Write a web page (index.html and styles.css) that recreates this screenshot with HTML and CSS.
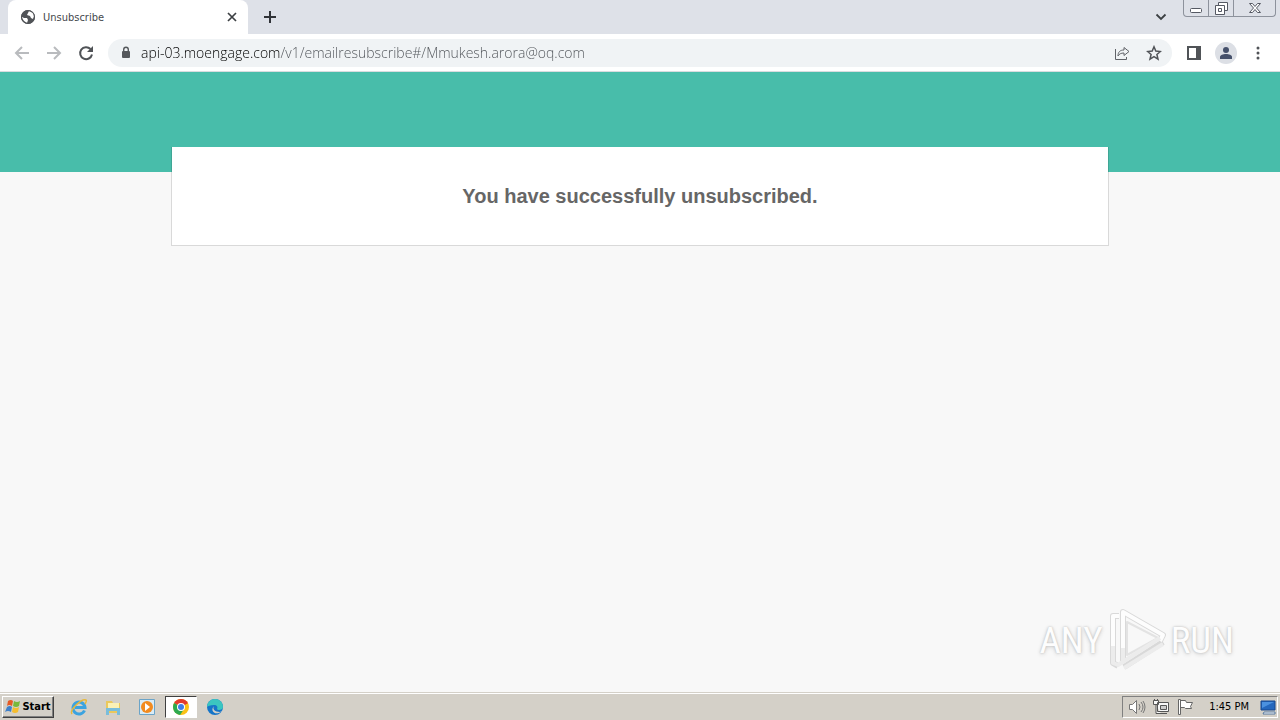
FILE: index.html
```html
<!DOCTYPE html>
<html lang="en">
<head>
  <meta charset="UTF-8" />
  <meta name="viewport" content="width=device-width, initial-scale=1.0"/>
  <title>Unsubscribe</title>
  <link rel="stylesheet" href="styles.css">
</head>
<body>

  <header class="tab-strip">
    <div class="tab">
      <svg class="globe" width="16" height="16" viewBox="0 0 16 16">
        <circle cx="8" cy="8" r="7" fill="#505357"/>
        <path d="M2 8l2 1h3l1 2-1 3-3-2-2-3zM9 2l4 2 1 3-1 3-2-1-1-2-3-1 1-2z" fill="#fff"/>
        <circle cx="8" cy="8" r="6.500" fill="none" stroke="#505357"/>
      </svg>
      <span class="tab-title">Unsubscribe</span>
      <button class="icon-button" aria-label="Close tab">
        <svg width="16" height="16" viewBox="0 0 16 16"><path d="M4 4l8 8M12 4l-8 8" stroke="#3c4043" stroke-width="1.700"/></svg>
      </button>
    </div>
    <button class="icon-button new-tab" aria-label="New tab">
      <svg width="16" height="16" viewBox="0 0 16 16"><path d="M8 2v12M2 8h12" stroke="#303338" stroke-width="2"/></svg>
    </button>
    <button class="icon-button tab-search" aria-label="Search tabs">
      <svg width="16" height="16" viewBox="0 0 16 16"><path d="M3.500 5.500L8 10l4.500-4.500" fill="none" stroke="#3c4043" stroke-width="1.800"/></svg>
    </button>
    <div class="window-buttons">
      <button aria-label="Minimize">
        <svg width="14" height="16" viewBox="0 0 14 16"><rect x="1.500" y="8.500" width="11" height="4" rx="1" fill="#fff" stroke="#555963"/></svg>
      </button>
      <button aria-label="Restore">
        <svg width="14" height="16" viewBox="0 0 14 16"><path d="M4.500 2.500h9v8h-9z" fill="#fff" stroke="#555963"/><path d="M1.500 5.500h9v9h-9zM4.500 8.500h3v3h-3z" fill="#fff" stroke="#555963"/></svg>
      </button>
      <button class="close-window" aria-label="Close">
        <svg width="14" height="16" viewBox="0 0 14 16"><path d="M1.500 3.500h3l2.500 3 2.500-3h3l-4 4.500 4 4.500h-3l-2.500-3-2.500 3h-3l4-4.500z" fill="#fff" stroke="#555963"/></svg>
      </button>
    </div>
  </header>

  <nav class="toolbar">
    <button class="icon-button" aria-label="Back">
      <svg width="16" height="16" viewBox="0 0 16 16"><path d="M15 8H2M8 2L2 8l6 6" fill="none" stroke="#b9bbbe" stroke-width="2"/></svg>
    </button>
    <button class="icon-button" aria-label="Forward">
      <svg width="16" height="16" viewBox="0 0 16 16"><path d="M1 8h13M8 2l6 6-6 6" fill="none" stroke="#b9bbbe" stroke-width="2"/></svg>
    </button>
    <button class="icon-button" aria-label="Reload">
      <svg width="16" height="16" viewBox="0 0 16 16"><path d="M12.500 4A6 6 0 1 0 14 9.500" fill="none" stroke="#505357" stroke-width="2"/><path d="M15 1v6H9z" fill="#505357"/></svg>
    </button>
    <div class="address-bar">
      <svg width="12" height="16" viewBox="0 0 12 16"><rect x="2" y="6" width="8" height="7" rx="1" fill="#55585c"/><path d="M3.700 7V4.500a2.300 2.300 0 0 1 4.600 0V7" fill="none" stroke="#55585c" stroke-width="1.400"/></svg>
      <input type="text" class="url" aria-label="Address" value="api-03.moengage.com/v1/emailresubscribe#/Mmukesh.arora@oq.com" spellcheck="false" />
      <button class="icon-button" aria-label="Share">
        <svg width="16" height="16" viewBox="0 0 16 16"><path d="M1.500 4v10.500h11V12M4 11c0-4 2-6 6-6V2.500l5 4-5 4V8c-3 0-5 1-6 3z" fill="none" stroke="#606368"/></svg>
      </button>
      <button class="icon-button" aria-label="Bookmark">
        <svg width="16" height="16" viewBox="0 0 16 16"><path d="M8 1.800l1.800 4.300 4.600.4-3.500 3 1.100 4.600L8 11.700l-4 2.400 1.100-4.600-3.500-3 4.600-.4z" fill="none" stroke="#505357" stroke-width="1.500"/></svg>
      </button>
    </div>
    <button class="icon-button" aria-label="Side panel">
      <svg width="16" height="16" viewBox="0 0 16 16"><path d="M1 1h14v14H1zM3 3v10h7V3z" fill="#505357" fill-rule="evenodd"/></svg>
    </button>
    <button class="icon-button profile" aria-label="Profile">
      <svg width="22" height="22" viewBox="0 0 22 22"><circle cx="11" cy="11" r="11" fill="#dcdfe5"/><circle cx="11" cy="8" r="3" fill="#46516b"/><path d="M5 17v-2c0-2 3-3 6-3s6 1 6 3v2z" fill="#46516b"/></svg>
    </button>
    <button class="icon-button" aria-label="Menu">
      <svg width="16" height="16" viewBox="0 0 16 16" fill="#505357"><circle cx="8" cy="3" r="1.500"/><circle cx="8" cy="8" r="1.500"/><circle cx="8" cy="13" r="1.500"/></svg>
    </button>
  </nav>

  <main class="page">
    <div class="banner"></div>
    <div class="card">
      <h1>You have successfully unsubscribed.</h1>
    </div>

    <div class="watermark">
      <span>ANY</span>
      <svg width="60" height="64" viewBox="0 0 60 64" fill="none" stroke-linejoin="round">
        <g stroke="#d9d9d9" stroke-width="6">
          <path d="M12 8H6v47l5 3"/>
          <path d="M16 53V4l40 23-3 6M17 59l39-25"/>
        </g>
        <path d="M20 14v33l31-17z" stroke="#e3e3e3" stroke-width="2"/>
        <g stroke="#fdfdfd" stroke-width="4">
          <path d="M12 8H6v30"/>
          <path d="M16 40V4l40 23-3 6"/>
        </g>
        <path d="M6 38v17l5 2 42-27M16 40v13M17 60l39-24" stroke="#ececec" stroke-width="4"/>
      </svg>
      <span>RUN</span>
    </div>
  </main>

  <footer class="taskbar">
    <button class="start">
      <svg width="16" height="16" viewBox="0 0 16 16">
        <path d="M3 2q3-2 5 0L7 7Q4 5 2 7z" fill="#e65a24"/>
        <path d="M9 2q3 2 6 0l-1 5q-3 2-6 0z" fill="#78b83b"/>
        <path d="M2 8q3-2 5 0l-1 5q-3-2-6 0z" fill="#3f80ca"/>
        <path d="M8 8q3 2 6 0l-1 5q-3 2-6 0z" fill="#f5bd2f"/>
      </svg>
      Start
    </button>
    <div class="apps">
      <button aria-label="Internet Explorer">
        <svg width="18" height="18" viewBox="0 0 18 18"><path d="M14.500 12.500a6 6 0 1 1 .5-3H5" fill="none" stroke="#3ba3e0" stroke-width="3"/><path d="M2 16C-1 12 12 0 16 2q1 1-1 4" fill="none" stroke="#e8b83a" stroke-width="1.500"/></svg>
      </button>
      <button aria-label="Explorer">
        <svg width="18" height="18" viewBox="0 0 18 18"><path d="M2 3h6l1 2h7v10H2z" fill="#eac85c"/><path d="M4 5h11v5H4z" fill="#fbf1b5"/><path d="M2 10h14v7h-3v-4H5v4H2z" fill="#79bddb"/></svg>
      </button>
      <button aria-label="Media Player">
        <svg width="18" height="18" viewBox="0 0 18 18"><path d="M1.500 1.500h15v15h-15z" fill="#d9ecf7" stroke="#6ba4c8"/><circle cx="9" cy="9" r="6" fill="#f28b20"/><path d="M7 5l5 4-5 4z" fill="#fff"/></svg>
      </button>
      <button class="active" aria-label="Chrome">
        <svg width="18" height="18" viewBox="0 0 18 18"><circle cx="9" cy="9" r="8" fill="#fbc116"/><path d="M9 9L2.100 5a8 8 0 0 1 13.800 0z" fill="#e33b2e"/><path d="M9 9L2.100 5a8 8 0 0 0 6 12L12 11z" fill="#2da94f"/><path d="M9 5h6.900L9 9z" fill="#e33b2e"/><circle cx="9" cy="9" r="4" fill="#fff"/><circle cx="9" cy="9" r="3" fill="#3f7de8"/></svg>
      </button>
      <button aria-label="Edge">
        <svg width="18" height="18" viewBox="0 0 18 18"><circle cx="9" cy="9" r="8" fill="#1675c8"/><path d="M1 9a8 8 0 0 1 16 0c0 3-5 4-6 2 1-2 0-4-3-4-4 0-6 1-7 2z" fill="#3bc6c0"/><path d="M8 8c-2 3 1 6 6 6l2-1-1 1C8 18 4 12 8 8z" fill="#d4d0c8"/></svg>
      </button>
    </div>
    <div class="tray">
      <svg width="18" height="18" viewBox="0 0 18 18" fill="none" stroke="#777"><path d="M1.500 6.500h3l4-4v13l-4-4h-3z" fill="#fff"/><path d="M11 6q2 3 0 6M13 4q4 5 0 10M15 3q4 6 0 12"/></svg>
      <svg width="18" height="18" viewBox="0 0 18 18" fill="none" stroke="#555"><path d="M5.500 4.500h11v9h-11zM8 15.500h7M1.500 2.500h5v4h-5zM2.500 1v2M5.500 1v2M4 7v8.500h5" fill="#f7f7f7"/><path d="M8.500 7.500h6v4h-6z" fill="#ccc"/></svg>
      <svg width="18" height="18" viewBox="0 0 18 18" stroke="#666"><path d="M2.500 1.500h2v15h-2zM4.500 2.500h5l1 2h6l-2 4 1 2h-6l-1-1h-4z" fill="#fff"/></svg>
      <time class="clock">1:45 PM</time>
      <svg width="18" height="18" viewBox="0 0 18 18"><path d="M2 3h14v9H2z" fill="#2467bd" stroke="#17468c"/><path d="M3 4h12L3 10z" fill="#4b91df"/><path d="M5 14h11v2H4z" fill="#fff" stroke="#54779d"/></svg>
    </div>
  </footer>

</body>
</html>
```
FILE: styles.css
```css
* {
  box-sizing: border-box;
}
body {
  display: flex;
  flex-direction: column;
  min-height: 100vh;
  margin: 0;
  font-family: "Liberation Sans", Arial, sans-serif;
  background: #f8f8f8;
}
button {
  display: flex;
  align-items: center;
  justify-content: center;
  padding: 0;
  border: none;
  background: none;
}
svg {
  display: block;
  flex: none;
}
.icon-button {
  flex: none;
  width: 16px;
  height: 16px;
}

/* browser */
.tab-strip {
  display: flex;
  align-items: center;
  height: 34px;
  padding: 0 4px 0 8px;
  background: #dee1e8;
}
.tab {
  display: flex;
  align-items: center;
  gap: 7px;
  width: 240px;
  height: 34px;
  padding: 0 8px 0 12px;
  border-radius: 8px 8px 0 0;
  background: #fff;
}
.tab-title {
  flex: 1;
  font: 11px "DejaVu Sans Condensed", "Noto Sans", sans-serif;
  color: #45484c;
}
.new-tab {
  margin-left: 14px;
}
.tab-search {
  margin-left: auto;
}
.window-buttons {
  display: flex;
  align-self: flex-start;
  margin-left: 14px;
  border: 1px solid #8d929c;
  border-top: none;
  border-radius: 0 0 4px 4px;
}
.window-buttons button {
  width: 25px;
  height: 16px;
  border-right: 1px solid #8d929c;
}
.window-buttons .close-window {
  width: 41px;
  border-right: none;
}
.toolbar {
  display: flex;
  align-items: center;
  gap: 16px;
  height: 38px;
  padding: 0 14px;
  border-bottom: 1px solid #d9dcdf;
  background: #fff;
}
.address-bar {
  display: flex;
  flex: 1;
  align-items: center;
  gap: 16px;
  height: 28px;
  margin-left: -2px;
  margin-right: -2px;
  padding: 0 10px 0 12px;
  border-radius: 14px;
  background: #f0f3f5;
}
.url {
  flex: 1;
  min-width: 0;
  height: 24px;
  margin-left: -7px;
  padding: 0;
  border: none;
  outline: none;
  font: 300 14px "Open Sans", "Noto Sans", sans-serif;
  color: #44474b;
  /* host part is darker than the path */
  background: linear-gradient(to right, #000 139px, #505459 139px);
  background-clip: text;
  -webkit-background-clip: text;
  -webkit-text-fill-color: transparent;
}
.profile {
  width: 22px;
  height: 22px;
  margin: 0 -3px;
}

/* page */
.page {
  position: relative;
  flex: 1;
}
.banner {
  height: 100px;
  background: #48bdaa;
}
.card {
  width: calc(100% - 32px);
  max-width: 938px;
  margin: -25px auto 0;
  padding: 36px 24px;
  border: 1px solid rgba(0, 0, 0, 0.12);
  border-top: none;
  background: #fff;
  background-clip: padding-box;
  text-align: center;
}
h1 {
  margin: 0;
  font-size: 20px;
  line-height: 26px;
  color: #666;
}
.watermark {
  position: absolute;
  right: 46px;
  bottom: 20px;
  display: flex;
  align-items: center;
  gap: 4px;
  font: 37px "Liberation Sans Narrow", "Roboto Condensed", "Liberation Sans", sans-serif;
  color: #fdfdfd;
  text-shadow: 0 0 2px #bbb, 0 1px 4px #ccc;
}

/* taskbar */
.taskbar {
  display: flex;
  align-items: center;
  height: 28px;
  padding-top: 1px;
  padding-right: 2px;
  padding-bottom: 1px;
  padding-left: 2px;
  border-top: 1px solid #d4d0c8;
  box-shadow: inset 0 1px #fff;
  background: #d4d0c8;
  font: 11px "DejaVu Sans Condensed", "Noto Sans", sans-serif;
  color: #000;
}
.start {
  gap: 1px;
  width: 52px;
  height: 22px;
  border: 1px solid;
  border-color: #fff #404040 #404040 #fff;
  box-shadow: inset -1px -1px #808080;
  font: bold 11px "DejaVu Sans Condensed", "Noto Sans", sans-serif;
  color: #000;
}
.apps {
  display: flex;
  gap: 2px;
  margin-left: 9px;
}
.apps button {
  width: 32px;
  height: 22px;
}
.apps .active {
  border: 1px solid;
  border-color: #404040 #fff #fff #404040;
  background: #fff;
}
.tray {
  display: flex;
  align-items: center;
  gap: 6px;
  height: 22px;
  margin-left: auto;
  padding: 0 0 0 5px;
  border: 1px solid;
  border-color: #808080 #fff #fff #808080;
}
.clock {
  margin: 0 4px 0 9px;
}
```
